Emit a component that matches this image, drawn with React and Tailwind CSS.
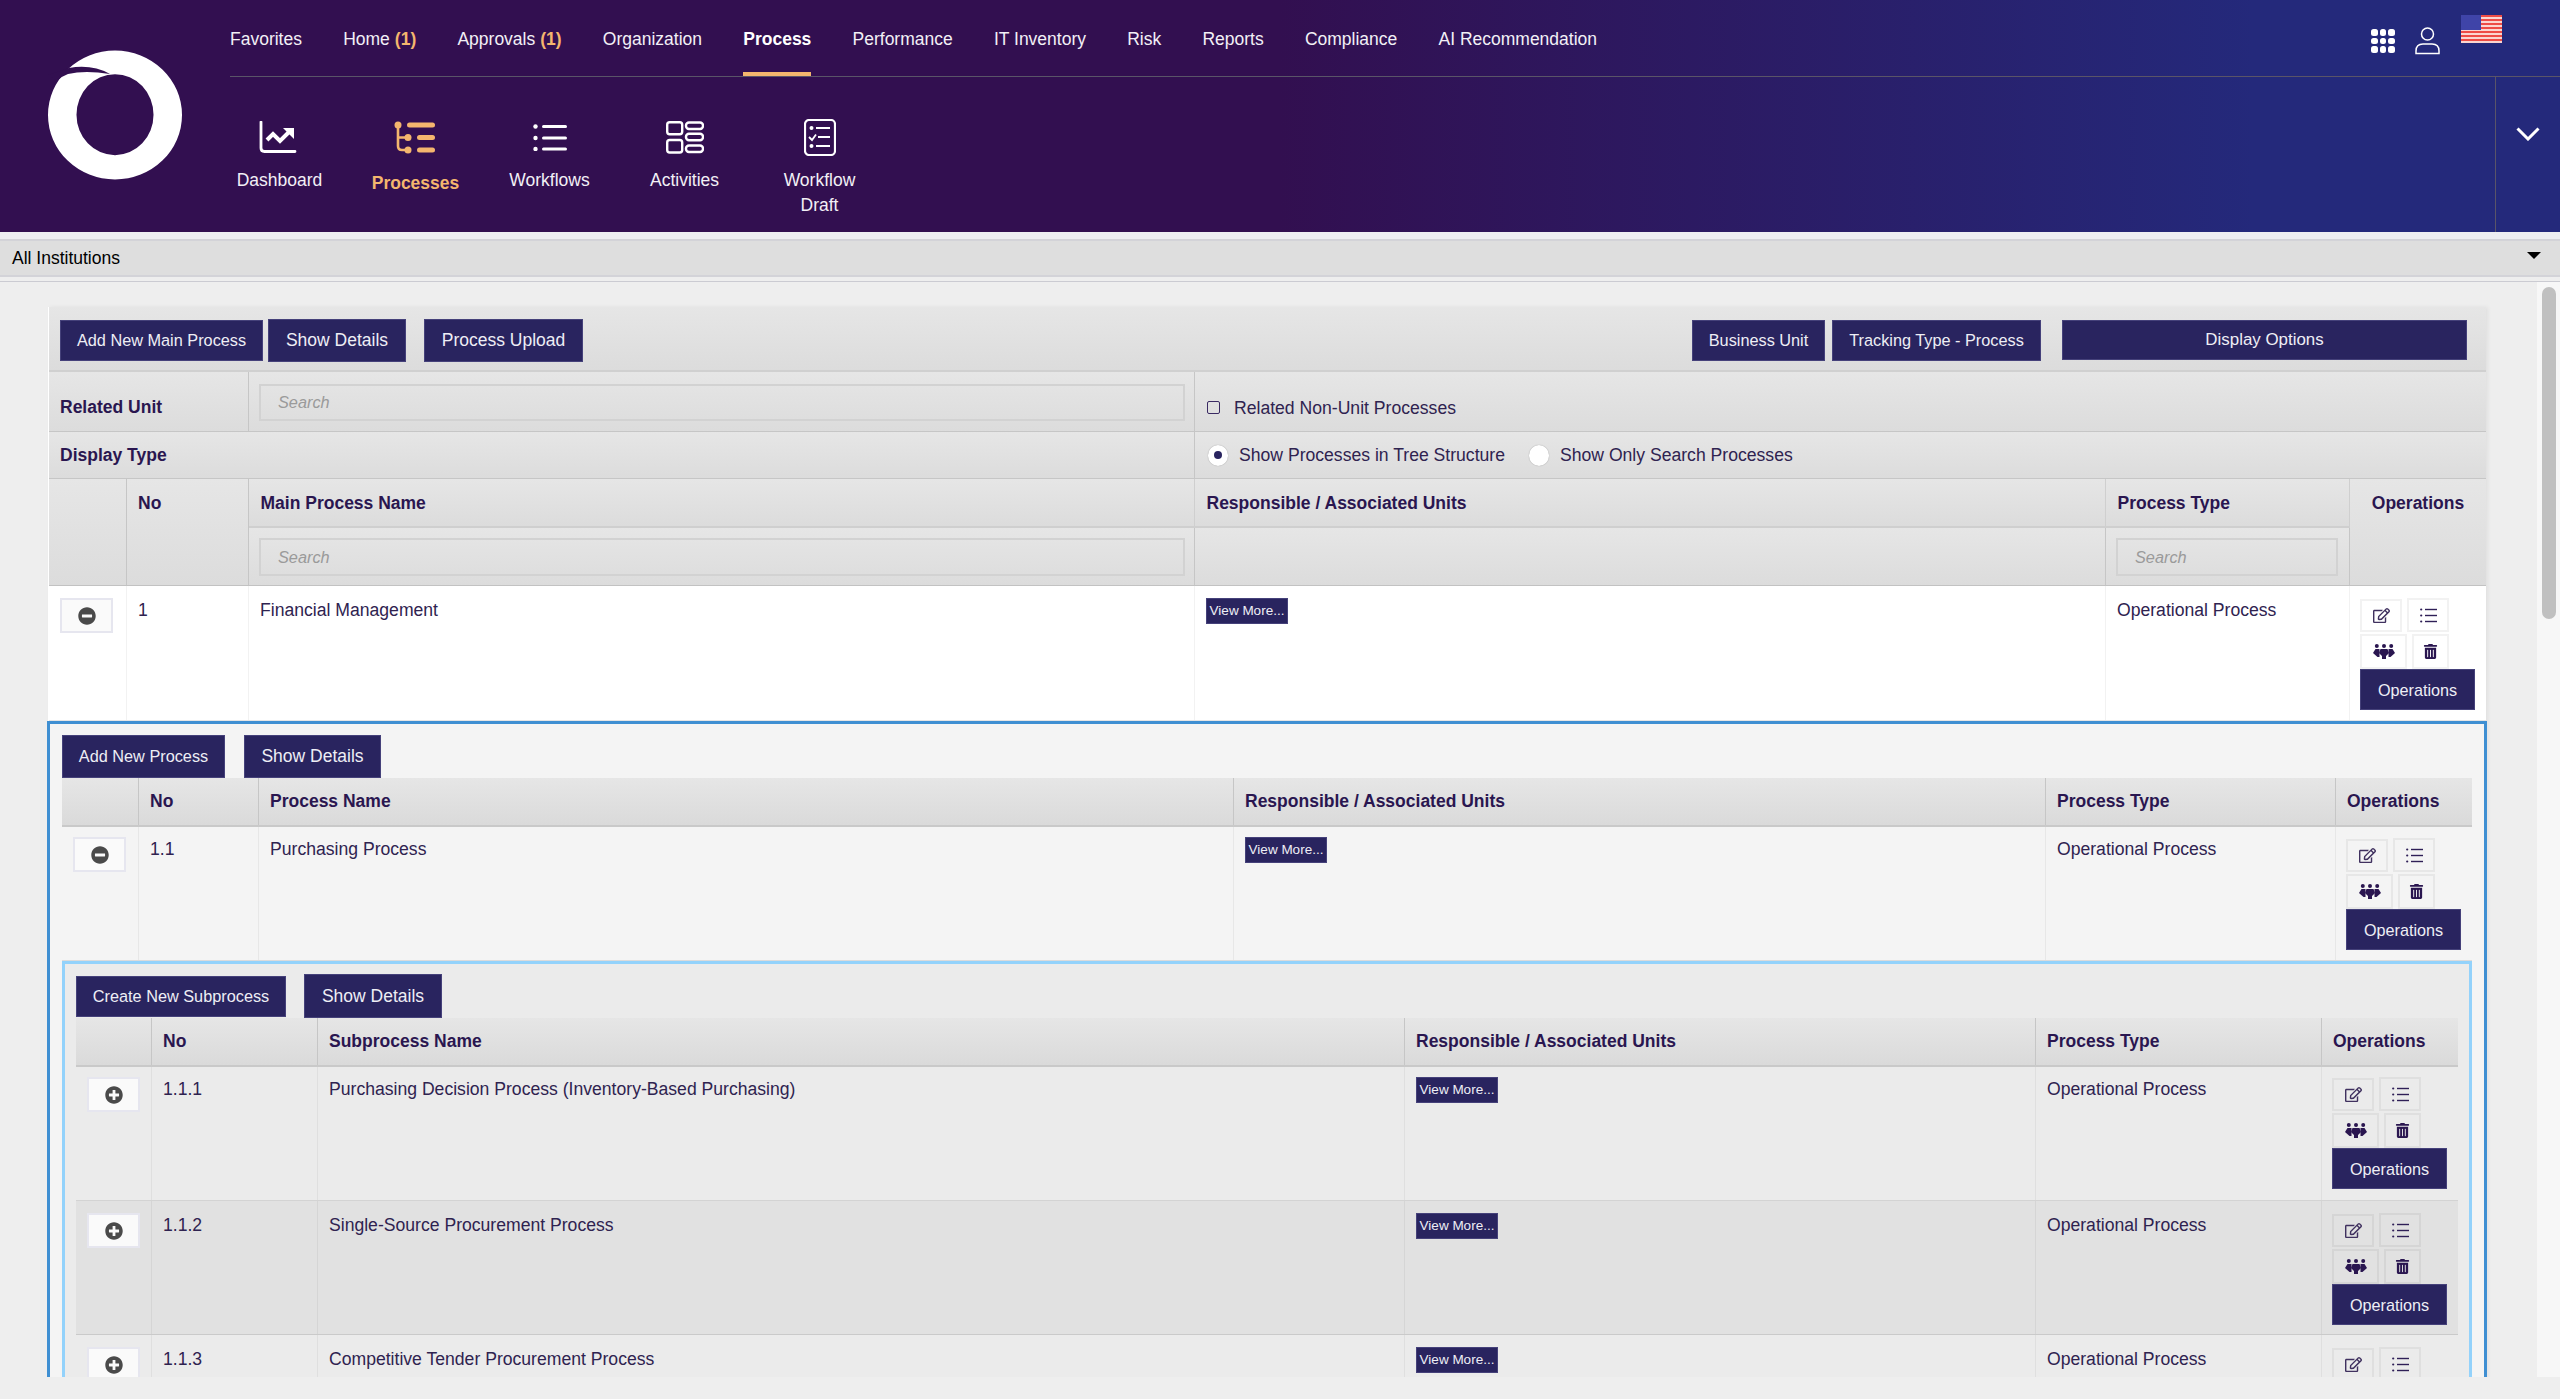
import { FaMinusCircle, FaPlusCircle, FaRegEdit, FaTrashAlt } from 'react-icons/fa'

const topMenu = ['Favorites', 'Home', 'Approvals', 'Organization', 'Process', 'Performance', 'IT Inventory', 'Risk', 'Reports', 'Compliance', 'AI Recommendation']

function Logo() {
  return (
    <svg width="170" height="150" viewBox="0 0 170 150" className="ml-[30px] mt-[40px]">
      <path
        fillRule="evenodd"
        fill="#fff"
        d="M85 10.5a67 64.5 0 1 0 0 129a67 64.5 0 1 0 0-129zM85 34.2a38.5 40.5 0 1 1 0 81a38.5 40.5 0 1 1 0-81z"
      />
      <path fill="#320f50" d="M39 28Q62 24 80 34Q55 30 38 34Q32 36 27 41L18 35Z" />
    </svg>
  )
}

function DashboardIcon() {
  return (
    <svg width="38" height="33" viewBox="0 0 38 33" fill="none" stroke="#fff" className="mr-[3px]">
      <path d="M2 1V27Q2 30.5 5.5 30.5H36" strokeWidth="2.8" strokeLinecap="round" />
      <path d="M8 19L14 13L21 20L30 11" strokeWidth="4" />
      <path d="M24 7H35V18Z" fill="#fff" stroke="none" />
    </svg>
  )
}

function ProcessesIcon() {
  return (
    <svg width="41" height="33" viewBox="0 0 41 33" fill="#f4b66e" stroke="none" className="mr-[2px]">
      <circle cx="4" cy="4" r="3.5" />
      <circle cx="14" cy="16.5" r="3.5" />
      <circle cx="14" cy="29" r="3.5" />
      <path d="M4 4V25Q4 29 8 29H14M4 16.5H14" fill="none" stroke="#f4b66e" strokeWidth="2.6" />
      <rect x="13" y="1.5" width="28" height="5" rx="2.5" />
      <rect x="23" y="14" width="18" height="5" rx="2.5" />
      <rect x="23" y="26.5" width="18" height="5" rx="2.5" />
    </svg>
  )
}

function WorkflowsIcon() {
  return (
    <svg width="34" height="27" viewBox="0 0 34 27" fill="#fff">
      <circle cx="2.5" cy="2.5" r="2.2" />
      <circle cx="2.5" cy="14" r="2.2" />
      <circle cx="2.5" cy="25" r="2.2" />
      <rect x="9" y="1" width="25" height="3" rx="1.5" />
      <rect x="9" y="12.5" width="25" height="3" rx="1.5" />
      <rect x="9" y="23.5" width="25" height="3" rx="1.5" />
    </svg>
  )
}

function ActivitiesIcon() {
  return (
    <svg width="38" height="33" viewBox="0 0 38 33" fill="none" stroke="#fff" strokeWidth="2.4">
      <rect x="1.2" y="1.2" width="15" height="12" rx="2.5" />
      <rect x="1.2" y="19" width="15" height="12.5" rx="2.5" />
      <rect x="20" y="1.5" width="17" height="6.5" rx="3" />
      <rect x="20" y="12.8" width="17" height="6.5" rx="3" />
      <rect x="20" y="24.5" width="17" height="6.5" rx="3" />
    </svg>
  )
}

function DraftIcon() {
  return (
    <svg width="32" height="37" viewBox="0 0 32 37" fill="none" stroke="#fff" strokeWidth="1.8">
      <rect x="1" y="1" width="30" height="35" rx="4" strokeWidth="2.2" />
      <circle cx="7.5" cy="9" r="1.1" fill="#fff" />
      <path d="M12 9H26M14 18H26M12 27H26" />
      <path d="M5 18L8 21L12 15.5" />
      <circle cx="7.5" cy="27" r="1.1" fill="#fff" />
    </svg>
  )
}

function GridIcon() {
  const dots = [0, 1, 2, 3, 4, 5, 6, 7, 8]
  return (
    <div className="grid w-[24px] grid-cols-3 gap-[2px]">
      {dots.map((dot) => (
        <span key={dot} className="h-[6.5px] w-[6.5px] rounded-[2.5px] bg-white" />
      ))}
    </div>
  )
}

function UserIcon() {
  return (
    <svg width="25" height="28" viewBox="0 0 25 28" fill="none" stroke="#fff" strokeWidth="1.5">
      <circle cx="12.5" cy="7" r="6" />
      <path d="M1 26.5V24Q1 17 8 17H17Q24 17 24 24V26.5Z" />
    </svg>
  )
}

function FlagIcon() {
  const stripes = [2, 6, 10, 14, 18, 22, 26]
  return (
    <svg width="41" height="28" viewBox="0 0 41 28">
      <rect width="41" height="28" fill="#ee4b45" />
      {stripes.map((y) => (
        <rect key={y} y={y} width="41" height="2" fill="#fbd5d0" />
      ))}
      <rect width="20" height="15" fill="#3f44a8" />
    </svg>
  )
}

function ListIcon() {
  return (
    <svg width="17" height="15" viewBox="0 0 17 15" fill="#2f1f57">
      <circle cx="1.2" cy="1.5" r="1.1" />
      <circle cx="1.2" cy="7.5" r="1.1" />
      <circle cx="1.2" cy="13.5" r="1.1" />
      <rect x="5" y="0.8" width="12" height="1.4" />
      <rect x="5" y="6.8" width="12" height="1.4" />
      <rect x="5" y="12.8" width="12" height="1.4" />
    </svg>
  )
}

function PeopleIcon() {
  return (
    <svg width="22" height="15" viewBox="0 0 22 15" fill="#2a1650">
      <circle cx="3.8" cy="2" r="2" />
      <circle cx="11" cy="2" r="2" />
      <circle cx="18.2" cy="2" r="2" />
      <path d="M2.5 5H6.5V13L4.5 13L0 9Z" />
      <path d="M19.5 5H15.5V13L17.5 13L22 9Z" />
      <path d="M7.5 5H14.5L16 9L13 12V15H9V12L6 9Z" />
    </svg>
  )
}

function Btn({ className = '', children }) {
  return (
    <button
      type="button"
      className={`flex shrink-0 items-center justify-center border border-[#45417a] bg-[#29245f] text-[#eeeef5] ${className}`}
    >
      {children}
    </button>
  )
}

function SearchBox({ className = '' }) {
  return (
    <div className={`flex items-center border-2 border-[#d2d2d2] pl-[17px] text-[16.3px] italic text-[#9a9a9a] ${className}`}>
      Search
    </div>
  )
}

function OpsCell({ top }) {
  return (
    <div className={`flex flex-col pl-[10px] ${top}`}>
      <div className="flex h-[36px] items-start gap-[5px]">
        <div className="mt-[1px] flex h-[33px] w-[42px] items-center justify-center border-2 border-black/5">
          <FaRegEdit size={17} color="#40315f" />
        </div>
        <div className="flex h-[34px] w-[42px] items-center justify-center border-2 border-black/5">
          <ListIcon />
        </div>
      </div>
      <div className="flex h-[35px] items-start gap-[5px]">
        <div className="flex h-[35px] w-[47px] items-center justify-center border-2 border-black/5">
          <PeopleIcon />
        </div>
        <div className="flex h-[35px] w-[37px] items-center justify-center border-2 border-black/5">
          <FaTrashAlt size={15} color="#2a1650" />
        </div>
      </div>
      <Btn className="h-[41px] w-[115px] text-[16.2px]">Operations</Btn>
    </div>
  )
}

function DataRow({ cols, height, bg, no, name, top, opsTop, open }) {
  const lines = 'border-r border-black/5'
  return (
    <div className={`grid ${cols} ${height} ${bg} border-b border-black/10 text-[17.6px] leading-[24px] text-[#2f2350]`}>
      <div className={`pl-[11px] ${top} ${lines}`}>
        <div className="flex h-[35px] w-[53px] items-center justify-center border-2 border-[#e6e6ef] bg-[#fafafa]">
          {open ? <FaMinusCircle size={18} color="#4a4a4a" /> : <FaPlusCircle size={18} color="#4a4a4a" />}
        </div>
      </div>
      <div className={`px-[11px] ${top} ${lines}`}>{no}</div>
      <div className={`px-[11px] ${top} ${lines}`}>{name}</div>
      <div className={`px-[11px] ${top} ${lines}`}>
        <Btn className="h-[26px] w-[82px] text-[13.5px]">View More...</Btn>
      </div>
      <div className={`px-[11px] ${top} ${lines}`}>Operational Process</div>
      <OpsCell top={opsTop} />
    </div>
  )
}

function HeadRow({ cols, name }) {
  const cell = 'flex h-[47px] items-center border-r border-[#c6c6c6] px-[11px]'
  return (
    <div className={`grid ${cols} border-b-2 border-[#c9c9c9] bg-gradient-to-b from-[#e6e6e6] to-[#dadada] text-[17.5px] font-bold text-[#2a1650]`}>
      <div className={cell} />
      <div className={cell}>No</div>
      <div className={cell}>{name}</div>
      <div className={cell}>Responsible / Associated Units</div>
      <div className={cell}>Process Type</div>
      <div className="flex h-[47px] items-center px-[11px]">Operations</div>
    </div>
  )
}

function MainHead() {
  const gradient = 'bg-gradient-to-b from-[#e6e6e6] to-[#dcdcdc]'
  const line = 'border-r border-[#c6c6c6]'
  const title = `flex h-[49px] items-center border-b-2 border-[#cfcfcf] pl-[11.5px] pr-[11px] pt-[1px] ${gradient} ${line}`
  const search = `h-[57px] pl-[10px] pr-[10px] pt-[10px] ${gradient} ${line}`
  return (
    <div className="grid grid-cols-[78px_122px_946px_911px_244px_136px] grid-rows-[49px_57px] border-b border-[#c2c2c2] text-[17.5px] font-bold text-[#2a1650]">
      <div className={`row-span-2 ${gradient} ${line}`} />
      <div className={`row-span-2 px-[11px] pt-[11px] ${gradient} ${line}`}>No</div>
      <div className={title}>Main Process Name</div>
      <div className={title}>Responsible / Associated Units</div>
      <div className={title}>Process Type</div>
      <div className={`row-span-2 pt-[11px] text-center ${gradient}`}>Operations</div>
      <div className={search}>
        <SearchBox className="h-[38px] w-[926px] font-normal" />
      </div>
      <div className={search} />
      <div className={search}>
        <SearchBox className="h-[38px] w-[222px] font-normal" />
      </div>
    </div>
  )
}

function App() {
  const subCols = 'grid-cols-[76px_166px_1087px_631px_286px_136px]'
  const nestedCols = 'grid-cols-[77px_120px_975px_812px_290px_136px]'
  const mainCols = 'grid-cols-[78px_122px_946px_911px_244px_136px]'

  return (
    <div className="flex h-[1399px] flex-col overflow-hidden bg-[#eeeeee] [font-family:'Liberation_Sans',Arial,sans-serif]">
      <header className="flex h-[232px] shrink-0 bg-[linear-gradient(90deg,#320f50_50%,#24297b_88%)] text-[17.5px] text-[#f2f0f6]">
        <div className="w-[212px] shrink-0">
          <Logo />
        </div>
        <div className="flex min-w-0 flex-1 flex-col">
          <div className="ml-[18px] flex h-[77px] shrink-0 items-center border-b border-[#5a5468]">
            <nav className="flex h-[76px] gap-[41.2px]">
              {topMenu.map((item) => (
                <div
                  key={item}
                  className={`flex items-center border-b-4 border-t-[6px] border-t-transparent ${item === 'Process' ? 'border-b-[#f4b66e] font-bold text-white' : 'border-b-transparent'}`}
                >
                  {item}
                  {(item === 'Home' || item === 'Approvals') && (
                    <span className="ml-[5px] font-bold text-[#f4b66e]">(1)</span>
                  )}
                </div>
              ))}
            </nav>
            <div className="ml-auto flex items-center pr-[58px]">
              <div className="mt-[6px]">
                <GridIcon />
              </div>
              <div className="ml-[20px] mt-[6px]">
                <UserIcon />
              </div>
              <div className="mb-[18px] ml-[21px]">
                <FlagIcon />
              </div>
            </div>
          </div>
          <div className="flex flex-1">
            {[
              { label: ['Dashboard'], icon: <DashboardIcon /> },
              { label: ['Processes'], icon: <ProcessesIcon />, active: true },
              { label: ['Workflows'], icon: <WorkflowsIcon /> },
              { label: ['Activities'], icon: <ActivitiesIcon /> },
              { label: ['Workflow', 'Draft'], icon: <DraftIcon /> },
            ].map((item) => (
              <div
                key={item.label[0]}
                className={`flex w-[135px] flex-col items-center pt-[41px] leading-[24.5px] ${item.active ? 'pl-[2px]' : ''}`}
              >
                <div className="flex h-[38px] items-center">{item.icon}</div>
                <div className={item.active ? 'mt-[15px] font-bold text-[#f4b66e]' : 'mt-[12px]'}>
                  {item.label.map((line) => (
                    <div key={line} className="text-center">{line}</div>
                  ))}
                </div>
              </div>
            ))}
            <div className="ml-auto flex w-[65px] items-start justify-center border-l border-[#5a5468] pt-[50px]">
              <svg width="24" height="14" viewBox="0 0 24 14" fill="none" stroke="#fff" strokeWidth="3">
                <path d="M1.5 1.5L12 12L22.5 1.5" />
              </svg>
            </div>
          </div>
        </div>
      </header>

      <div className="h-[7px] shrink-0 bg-[#eeeef2]" />
      <div className="flex h-[38px] shrink-0 items-center justify-between border-y-2 border-[#d3d3d8] bg-[#dedede] pl-[12px] pr-[19px] text-[17.5px] text-black">
        <span>All Institutions</span>
        <span className="mb-[6px] h-0 w-0 border-x-[7px] border-t-[7px] border-x-transparent border-t-black" />
      </div>
      <div className="h-[5px] shrink-0 border-b border-[#cbcbd2] bg-[#eeeeee]" />

      <div className="flex min-h-0 flex-1 overflow-hidden">
        <main className="min-w-0 flex-1 overflow-hidden pl-[48px] pt-[25px]">
          <div className="w-[2438px] border-l border-white shadow-[2px_0_4px_rgba(0,0,0,0.06)]">
            <div className="flex h-[65px] items-center justify-between border-b-2 border-[#d0d0d0] bg-gradient-to-b from-[#e6e6e6] to-[#dcdcdc] pl-[11px] pr-[19px] pt-[3px]">
              <div className="flex items-center">
                <Btn className="h-[41px] w-[203px] text-[16.3px]">Add New Main Process</Btn>
                <Btn className="ml-[5px] h-[43px] w-[138px] text-[17.5px]">Show Details</Btn>
                <Btn className="ml-[18px] h-[43px] w-[159px] text-[17.5px]">Process Upload</Btn>
              </div>
              <div className="flex items-center">
                <Btn className="h-[41px] w-[133px] text-[16.3px]">Business Unit</Btn>
                <Btn className="ml-[7px] h-[41px] w-[209px] text-[16.3px]">Tracking Type - Process</Btn>
                <Btn className="ml-[21px] h-[40px] w-[405px] text-[16.9px]">Display Options</Btn>
              </div>
            </div>

            <div className="grid h-[60px] grid-cols-[200px_946px_1fr] border-b border-[#c6c6c6] bg-gradient-to-b from-[#e6e6e6] to-[#dcdcdc] text-[17.6px]">
              <div className="flex items-center border-r border-[#c6c6c6] pl-[11px] pt-[12px] text-[17.5px] font-bold text-[#2a1650]">Related Unit</div>
              <div className="border-r border-[#c6c6c6] pl-[10px] pt-[12px]">
                <SearchBox className="h-[37px] w-[926px]" />
              </div>
              <div className="flex items-center pl-[12px] pt-[13px] text-[#2f2350]">
                <span className="mb-[2px] h-[13px] w-[13px] rounded-[2px] border-[1.5px] border-[#3a2a63]" />
                <span className="ml-[14px]">Related Non-Unit Processes</span>
              </div>
            </div>

            <div className="grid h-[47px] grid-cols-[1146px_1fr] border-b border-[#c6c6c6] bg-gradient-to-b from-[#e6e6e6] to-[#dcdcdc] text-[17.6px]">
              <div className="flex items-center border-r border-[#c6c6c6] pl-[11px] text-[17.5px] font-bold text-[#2a1650]">Display Type</div>
              <div className="flex items-center pl-[13px] text-[#2f2350]">
                <span className="flex h-[21px] w-[20px] items-center justify-center rounded-full bg-white shadow-[0_0_1px_rgba(0,0,0,0.4)]">
                  <span className="h-[8px] w-[8px] rounded-full bg-[#29245f]" />
                </span>
                <span className="ml-[11px]">Show Processes in Tree Structure</span>
                <span className="ml-[24px] h-[21px] w-[20px] rounded-full bg-white shadow-[0_0_1px_rgba(0,0,0,0.4)]" />
                <span className="ml-[11px]">Show Only Search Processes</span>
              </div>
            </div>

            <MainHead />
            <DataRow cols={mainCols} height="h-[135px]" bg="bg-white" no="1" name="Financial Management" top="pt-[12px]" opsTop="pt-[12px]" open />

            <section className="-ml-[2px] w-[2440px] border-[3px] border-[#3f8fd2] bg-[#f4f4f4] px-[12px] pt-[11px]">
              <div className="flex h-[43px] items-start">
                <Btn className="h-[43px] w-[163px] text-[16.3px]">Add New Process</Btn>
                <Btn className="ml-[19px] h-[43px] w-[137px] text-[17.5px]">Show Details</Btn>
              </div>
              <HeadRow cols={nestedCols} name="Process Name" />
              <DataRow cols={nestedCols} height="h-[134px]" bg="bg-[#f4f4f4]" no="1.1" name="Purchasing Process" top="pt-[10px]" opsTop="pt-[11px]" open />

              <section className="w-[2410px] border-[3px] border-[#93d2fb] bg-[#ebebeb] px-[11px] pt-[10px]">
                <div className="flex h-[44px] items-center">
                  <Btn className="h-[41px] w-[210px] text-[16.3px]">Create New Subprocess</Btn>
                  <Btn className="ml-[18px] h-[44px] w-[138px] text-[17.5px]">Show Details</Btn>
                </div>
                <HeadRow cols={subCols} name="Subprocess Name" />
                <DataRow cols={subCols} height="h-[134px]" bg="bg-[#ebebeb]" no="1.1.1" name="Purchasing Decision Process (Inventory-Based Purchasing)" top="pt-[10px]" opsTop="pt-[10px]" />
                <DataRow cols={subCols} height="h-[134px]" bg="bg-[#e1e1e1]" no="1.1.2" name="Single-Source Procurement Process" top="pt-[12px]" opsTop="pt-[12px]" />
                <DataRow cols={subCols} height="h-[134px]" bg="bg-[#ebebeb]" no="1.1.3" name="Competitive Tender Procurement Process" top="pt-[12px]" opsTop="pt-[12px]" />
              </section>
            </section>
          </div>
        </main>
        <aside className="w-[23px] shrink-0 bg-[#f7f7f7] pt-[5px]">
          <div className="mx-auto h-[332px] w-[14px] rounded-full bg-[#c0c0c0]" />
        </aside>
      </div>
      <div className="h-[22px] shrink-0 bg-[#eeeeee]" />
    </div>
  )
}

export default App
